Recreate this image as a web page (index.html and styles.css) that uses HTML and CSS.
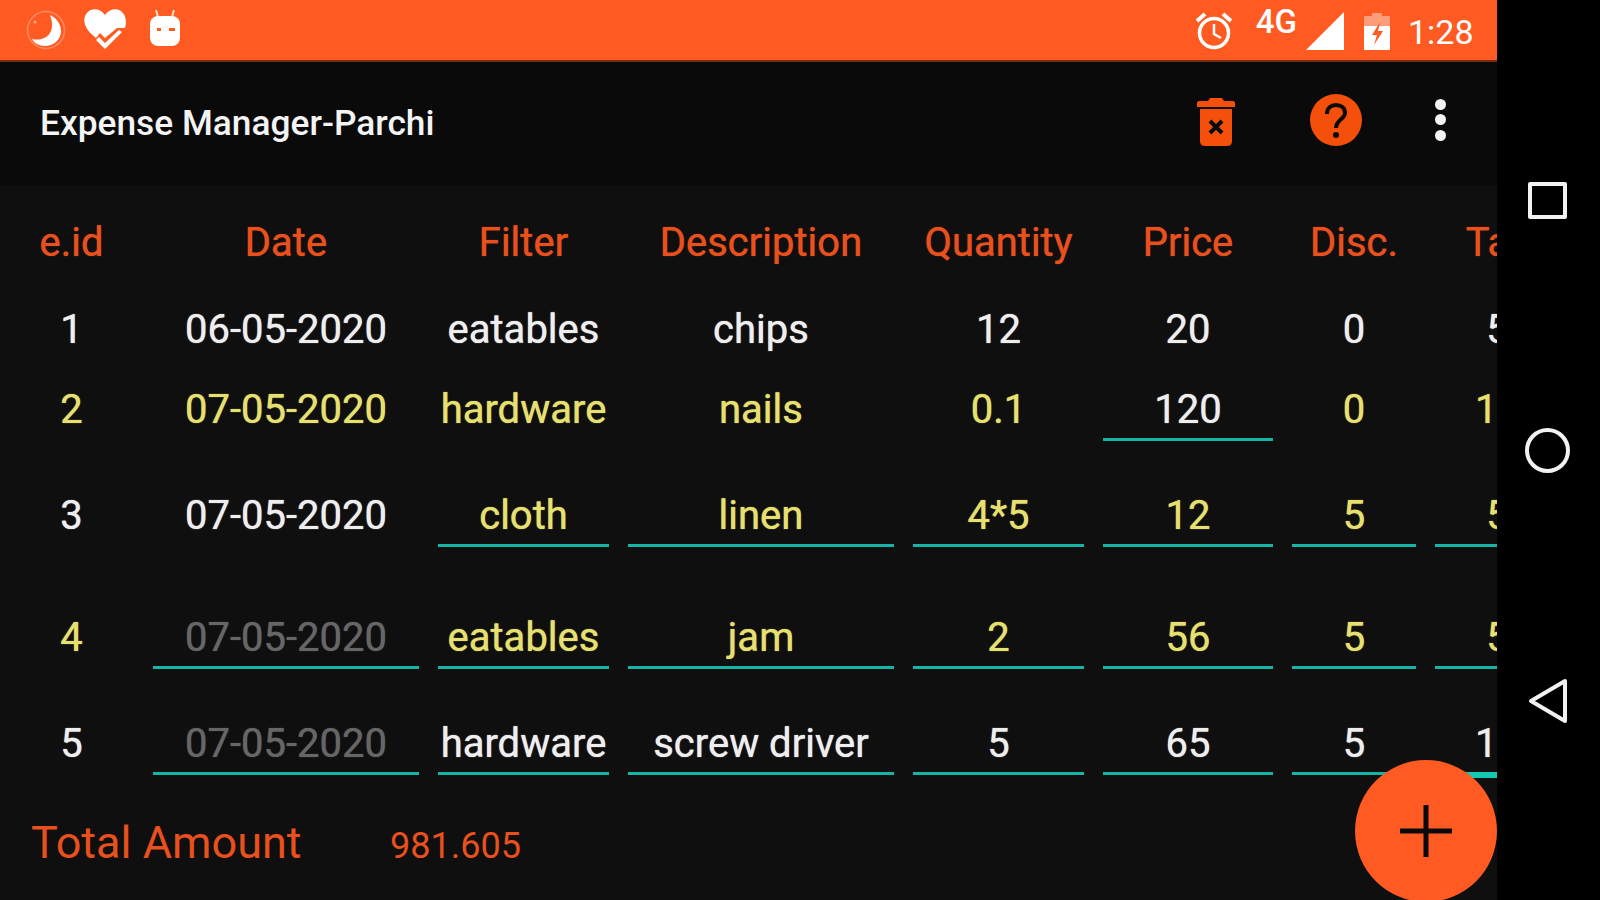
FILE: index.html

```html
<!DOCTYPE html>
<html lang="en">
<head>
  <meta charset="UTF-8" />
  <meta name="viewport" content="width=device-width, initial-scale=1.0"/>
  <title>Expense Manager-Parchi</title>
  <link rel="stylesheet" href="styles.css">
</head>
<body>

  <div class="screen">
    <!-- Status Bar -->
    <div class="status-bar">
      <svg class="st-moon" width="44" height="44" viewBox="0 0 44 44">
        <circle cx="22" cy="22" r="18.5" fill="none" stroke="#fff" stroke-opacity="0.3" stroke-width="1.5"/>
        <path d="M26 7C31 9 37 15 37 23C37 32 29 38 21 38C15 38 10 35 8 31C16 33 24 30 27 23C29 18 28 12 26 7Z" fill="#fff"/>
        <circle cx="11" cy="14" r="1.5" fill="#fff" fill-opacity="0.5"/>
      </svg>
      <svg class="st-heart" width="44" height="42" viewBox="0 0 44 42">
        <path d="M22 7C18 1 11 0 6 3C1 7 0 13 3 19C5 23 9 27 13 30L17 25L22 30L34 20L42 20C44 14 43 7 38 3C33 0 26 1 22 7Z" fill="#fff"/>
        <path d="M13 32L22 41L33 30L39 24L36 22L22 35L16 29Z" fill="#fff"/>
      </svg>
      <svg class="st-droid" width="32" height="38" viewBox="0 0 32 38">
        <path d="M7 1L9 8M25 1L23 8" stroke="#fff" stroke-width="2" stroke-opacity="0.8"/>
        <rect x="1" y="7" width="30" height="30" rx="8" fill="#fff"/>
        <rect x="8" y="19" width="4" height="3" fill="#ff5a22"/>
        <rect x="20" y="19" width="6" height="3" fill="#ff5a22"/>
      </svg>
      <div class="spacer"></div>
      <svg class="st-alarm" width="38" height="38" viewBox="0 0 38 38">
        <circle cx="19" cy="21" r="14.5" fill="none" stroke="#fff" stroke-width="3.5"/>
        <path d="M19 12V22L26 26" fill="none" stroke="#fff" stroke-width="2.5"/>
        <path d="M2 9L10 2M36 9L28 2" stroke="#fff" stroke-width="4"/>
      </svg>
      <span class="st-net">4G</span>
      <svg class="st-signal" width="38" height="38" viewBox="0 0 38 38">
        <path d="M38 0V38H0Z" fill="#fff"/>
      </svg>
      <svg class="st-battery" width="26" height="37" viewBox="0 0 26 37">
        <path d="M8 0H18V3H26V13H0V3H8Z" fill="#fff" fill-opacity="0.4"/>
        <path d="M0 13H26V37H0Z" fill="#fff"/>
        <path d="M16 9L8 22H13L10 32L19 18H14Z" fill="#ff5a22"/>
      </svg>
      <span class="st-time">1:28</span>
    </div>

    <!-- App Bar -->
    <div class="app-bar">
      <div class="app-title">Expense Manager-Parchi</div>
      <svg class="ic-trash" width="38" height="48" viewBox="0 0 38 48">
        <path d="M13 0H25L27 3H36Q38 3 38 5V9H0V5Q0 3 2 3H11Z" fill="#f4500c"/>
        <path d="M3 11H35V43Q35 48 30 48H8Q3 48 3 43Z" fill="#f4500c"/>
        <path d="M13 23L25 35M25 23L13 35" stroke="#0a0a0a" stroke-width="4"/>
      </svg>
      <svg class="ic-help" width="52" height="52" viewBox="0 0 52 52">
        <circle cx="26" cy="26" r="26" fill="#f4500c"/>
        <path d="M17 20C17 14 21 11 26 11C31 11 35 14 35 19C35 25 26 26 26 34" fill="none" stroke="#0a0a0a" stroke-width="4"/>
        <circle cx="26" cy="41" r="3" fill="#0a0a0a"/>
      </svg>
      <div class="ic-more"><i></i><i></i><i></i></div>
    </div>

    <!-- Table -->
    <div class="content">
      <div class="row head">
        <div>e.id</div><div>Date</div><div>Filter</div><div>Description</div><div>Quantity</div><div>Price</div><div>Disc.</div><div>Tax</div>
      </div>
      <div class="row">
        <div>1</div><div>06-05-2020</div><div>eatables</div><div>chips</div><div>12</div><div>20</div><div>0</div><div>5</div>
      </div>
      <div class="row yellow">
        <div>2</div><div>07-05-2020</div><div>hardware</div><div>nails</div><div>0.1</div><div class="edit white">120</div><div>0</div><div>12</div>
      </div>
      <div class="row mt-small">
        <div>3</div><div>07-05-2020</div><div class="edit yellow">cloth</div><div class="edit yellow">linen</div><div class="edit yellow">4*5</div><div class="edit yellow">12</div><div class="edit yellow">5</div><div class="edit yellow">5</div>
      </div>
      <div class="row yellow mt-large">
        <div>4</div><div class="edit grey">07-05-2020</div><div class="edit">eatables</div><div class="edit">jam</div><div class="edit">2</div><div class="edit">56</div><div class="edit">5</div><div class="edit">5</div>
      </div>
      <div class="row mt-small">
        <div>5</div><div class="edit grey">07-05-2020</div><div class="edit">hardware</div><div class="edit">screw driver</div><div class="edit">5</div><div class="edit">65</div><div class="edit">5</div><div class="edit">12</div>
      </div>

      <div class="total">
        <span class="total-label">Total Amount</span>
        <span class="total-value">981.605</span>
      </div>
    </div>

    <div class="scroll-thumb"></div>
    <div class="fab">
      <svg width="52" height="52" viewBox="0 0 52 52">
        <path d="M26 0V52M0 26H52" stroke="#0a0a0a" stroke-width="5"/>
      </svg>
    </div>
  </div>

  <!-- Navigation Bar -->
  <div class="nav-bar">
    <div class="nav-square"></div>
    <div class="nav-circle"></div>
    <svg width="40" height="46" viewBox="0 0 40 46">
      <path d="M37 3V43L3 23Z" fill="none" stroke="#f2f2f2" stroke-width="4" stroke-linejoin="round"/>
    </svg>
  </div>

</body>
</html>
```

FILE: styles.css

```css
body {
  margin: 0;
  width: 1600px;
  height: 900px;
  display: flex;
  overflow: hidden;
  background: #000;
  font-family: 'Roboto', 'Liberation Sans', sans-serif;
}
.screen {
  position: relative;
  width: 1497px;
  height: 900px;
  overflow: hidden;
  background: #0f0f0f;
}
.status-bar {
  height: 62px;
  box-sizing: border-box;
  border-bottom: 2px solid #7a2c10;
  background: #ff5a22;
  display: flex;
  align-items: center;
  color: #fff;
}
.spacer {
  flex: 1;
}
.st-moon {
  margin-left: 24px;
}
.st-heart {
  margin-left: 15px;
  margin-top: -2px;
}
.st-droid {
  margin-left: 22px;
  margin-top: -4px;
}
.st-alarm {
  margin-top: 2px;
}
.st-net {
  margin-left: 23px;
  margin-top: -18px;
  font-size: 33px;
  font-weight: 500;
}
.st-signal {
  margin-left: 9px;
  margin-top: 2px;
}
.st-battery {
  margin-left: 20px;
  margin-top: 2px;
}
.st-time {
  width: 89px;
  margin-left: 18px;
  font-size: 34px;
  margin-top: 4px;
}
.app-bar {
  height: 123px;
  padding-left: 40px;
  display: flex;
  align-items: center;
  background: #0a0a0a;
}
.app-title {
  flex: 1;
  margin-top: -2px;
  color: #f4f4f4;
  font-size: 35.3px;
  font-weight: 500;
}
.ic-trash {
  margin-right: 75px;
  margin-top: -4px;
}
.ic-help {
  margin-right: 73px;
  margin-top: -8px;
}
.ic-more {
  width: 11px;
  margin-right: 51px;
  margin-top: -8px;
  display: flex;
  flex-direction: column;
  gap: 4.5px;
}
.ic-more i {
  width: 11px;
  height: 11px;
  border-radius: 50%;
  background: #f4f4f4;
}
.content {
  padding-top: 17px;
  padding-left: 9px;
}
.row {
  display: grid;
  grid-template-columns: 125px 266px 171px 266px 171px 170px 124px 125px;
  column-gap: 19px;
  height: 80px;
  color: #eeeeee;
  font-size: 40px;
  line-height: 83px;
  text-align: center;
  white-space: nowrap;
  text-shadow: 0 0 1px currentColor;
}
.head {
  height: 86px;
  color: #e8501e;
  line-height: 82px;
}
.head div {
  height: 80px;
}
.mt-small {
  margin-top: 26px;
}
.mt-large {
  margin-top: 42px;
}
.edit {
  height: 73px;
  box-sizing: border-box;
  border-bottom: 3px solid #14b5a5;
}
.yellow {
  color: #e6e070;
}
.white {
  color: #eeeeee;
}
.grey {
  color: #666666;
}
.total {
  margin-top: 34px;
  padding-left: 22px;
  display: flex;
  align-items: baseline;
  color: #e8501e;
}
.total-label {
  width: 359px;
  font-size: 45px;
}
.total-value {
  font-size: 36px;
}
.scroll-thumb {
  position: absolute;
  left: 1436px;
  top: 772px;
  width: 61px;
  height: 6px;
  background: #14c8b4;
}
.fab {
  position: absolute;
  left: 1355px;
  top: 760px;
  width: 142px;
  height: 142px;
  border-radius: 50%;
  background: #ff5a22;
  display: flex;
  align-items: center;
  justify-content: center;
}
.nav-bar {
  width: 103px;
  height: 900px;
  box-sizing: border-box;
  padding-top: 182px;
  padding-right: 2px;
  display: flex;
  flex-direction: column;
  align-items: center;
}
.nav-square {
  width: 39px;
  height: 37px;
  box-sizing: border-box;
  border: 4px solid #f2f2f2;
  border-radius: 2px;
}
.nav-circle {
  width: 45px;
  height: 45px;
  margin-top: 209px;
  box-sizing: border-box;
  border: 4px solid #f2f2f2;
  border-radius: 50%;
}
.nav-bar svg {
  margin-top: 205px;
}
```
